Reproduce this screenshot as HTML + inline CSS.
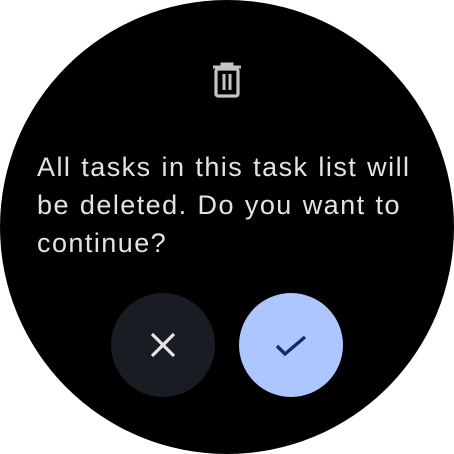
<html><head><style>
body{margin:0;width:454px;height:454px;background:#fff;overflow:hidden;font-family:"Liberation Sans",sans-serif}
.w{position:absolute;left:0;top:0;width:454px;height:454px;border-radius:50%;background:#000}
.t{position:absolute;left:37px;top:148px;width:420px;color:#e3e3e3;font-size:27px;line-height:38px;letter-spacing:1.45px;word-spacing:1px;white-space:nowrap}
.b{position:absolute;top:293px;width:104px;height:104px;border-radius:50%}
</style></head><body>
<div class="w"></div>
<svg style="position:absolute;left:210px;top:62px" width="34" height="38" viewBox="0 0 34 38">
<path d="M3 5H31M12 5V2H22V5" stroke="#c4c4c4" stroke-width="3" fill="none"/>
<rect x="6" y="7" width="22" height="27" rx="2" stroke="#c4c4c4" stroke-width="3.2" fill="none"/>
<path d="M14 12V28M20 12V28" stroke="#c4c4c4" stroke-width="3"/>
</svg>
<div class="t">All tasks in this task list will<br>be deleted. Do you want to<br>continue?</div>
<div class="b" style="left:111px;background:#191c22"></div>
<div class="b" style="left:239px;background:#adc6ff"></div>
<svg style="position:absolute;left:149px;top:331px" width="28" height="28"><path d="M3 3L25 25M25 3L3 25" stroke="#e6e6e6" stroke-width="3.2"/></svg>
<svg style="position:absolute;left:274px;top:334px" width="34" height="24"><path d="M3 12L11 20L31 3" stroke="#0d2f5e" stroke-width="3.4" fill="none"/></svg>
</body></html>
